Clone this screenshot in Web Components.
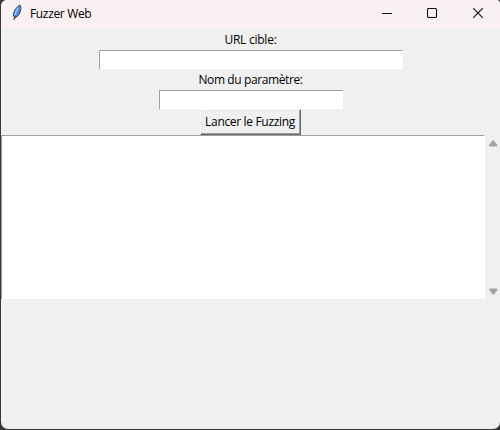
<!DOCTYPE html>
<html lang="fr"><head><meta charset="utf-8"><title>Fuzzer Web</title>
<style>html,body{margin:0;height:100%;overflow:hidden;background:#303034}</style></head>
<body>
<app-window>
  <title-bar slot="title">Fuzzer Web</title-bar>
  <tk-label style="--ls:-.25px">URL cible:</tk-label>
  <tk-entry style="--w:304px"></tk-entry>
  <tk-label style="--ls:-.4px">Nom du paramètre:</tk-label>
  <tk-entry style="--w:184px"></tk-entry>
  <tk-button>Lancer le Fuzzing</tk-button>
  <tk-scrolled-text></tk-scrolled-text>
</app-window>
<script>
const define = (name, html) => customElements.define(name, class extends HTMLElement {
  constructor() {
    super();
    const t = document.createElement('template');
    t.innerHTML = html;
    this.attachShadow({mode: 'open'}).append(t.content.cloneNode(true));
  }
});
define('app-window', `<style>
:host{display:flex;flex-direction:column;box-sizing:border-box;width:500px;height:430px;padding:0 0 1px 1px;background:#38383b;font:12px/17px "Open Sans","Noto Sans",sans-serif;color:#000}
.frame{display:flex;flex-direction:column;flex:1;background:#f0f0f0;border-radius:6px 4px 7px 7px;overflow:hidden}
main{display:flex;flex-direction:column;align-items:center;flex:1}
</style><div class="frame"><slot name="title"></slot><main><slot></slot></main></div>`);
define('title-bar', `<style>
:host{display:flex;height:29px;background:#f9f0f1;align-items:flex-start}
.icon{width:12px;height:18px;margin:4px 0 0 10px}
.name{margin:5px 0 0 7px;flex:1;letter-spacing:-.34px;white-space:nowrap}
.controls{display:flex;gap:34px;margin:7px 17px 0 0}
.controls svg{width:11px;height:12px;display:block;fill:none;stroke:#111;stroke-width:1.1}
.controls svg:last-child{margin:0 -1px 0 1px}
</style>
<svg class="icon" viewBox="0 0 12 18"><path d="M9 1.2 C10.6 3 9.6 8.5 7.2 11.5 L4.2 13.8 2.6 12 C2 8 5 3 9 1.2Z" fill="#4f93e6" stroke="#1c2b40" stroke-width=".9"/><path d="M7.2 3.8C5.2 6 4.2 8.5 3.9 11" stroke="#a8cff8" stroke-width="1.2" fill="none"/><path d="M4 12.5L2.8 16" stroke="#101820" stroke-width=".9" fill="none"/></svg>
<span class="name"><slot></slot></span>
<div class="controls">
<svg viewBox="0 0 11 12"><path d="M0 6.5h10"/></svg>
<svg viewBox="0 0 11 12"><rect x=".5" y="1.5" width="9" height="9" rx="1"/></svg>
<svg viewBox="0 0 11 12"><path d="M.2 1.2l9.6 9.6M9.8 1.2L.2 10.8"/></svg>
</div>`);
define('tk-label', `<style>:host{display:block;height:21px;line-height:21px;letter-spacing:var(--ls);white-space:nowrap}</style><slot></slot>`);
define('tk-entry', `<style>:host{display:block;box-sizing:border-box;width:var(--w);height:19px;background:#fff;border:solid #a0a0a0;border-width:1px 0 0 1px}</style>`);
define('tk-button', `<style>:host{display:block;text-align:center;box-sizing:border-box;width:101px;height:26px;padding:3px 1px 0 0;border:1px solid;border-color:#fff #696969 #696969 #fff;box-shadow:inset -1px -1px #a0a0a0,inset 1px 1px #e3e3e3;white-space:nowrap;letter-spacing:-.33px}</style><slot></slot>`);
define('tk-scrolled-text', `<style>
:host{display:flex;align-self:stretch;height:164px}
.text{width:484px;box-sizing:border-box;background:#fff;border:solid #a0a0a0;border-width:1px 0 0 1px;border-right:1px solid #fff}
.bar{flex:1;display:flex;flex-direction:column;justify-content:space-between;align-items:center;padding:5px 0 4px 1px;box-sizing:border-box}
.bar svg{width:9px;height:7px;fill:#a3a3a3}
</style><div class="text"></div><div class="bar">
<svg viewBox="0 0 9 7"><path d="M3.5.6h1.5L8.5 5.2 8 6.5H.5L0 5.2Z"/></svg>
<svg viewBox="0 0 9 7"><path d="M3.5 6.4h1.5L8.5 1.8 8 .5H.5L0 1.8Z"/></svg></div>`);
</script></body></html>
